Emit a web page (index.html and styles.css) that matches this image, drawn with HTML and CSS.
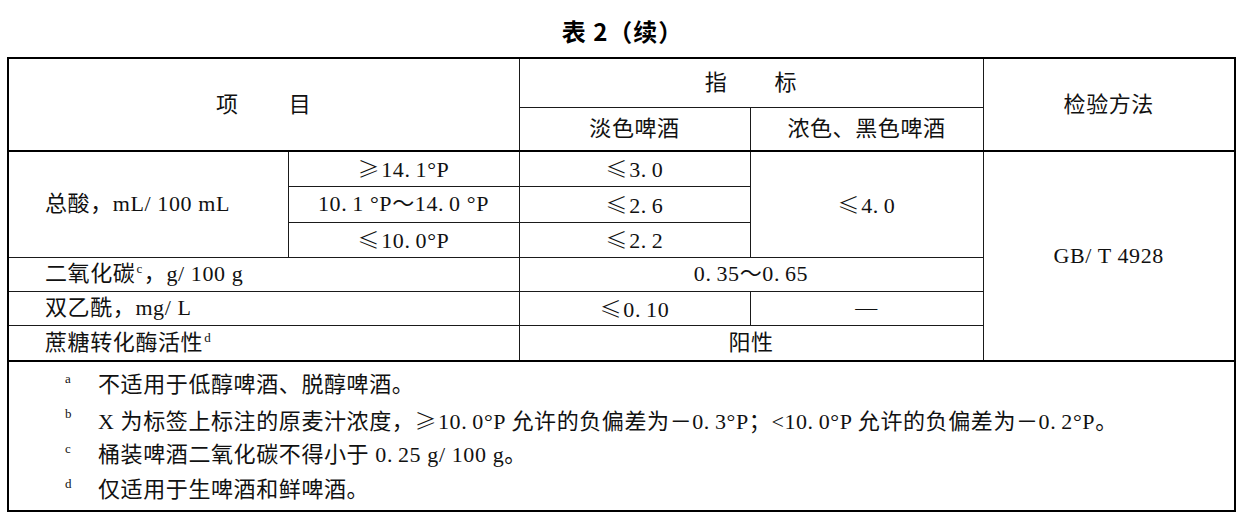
FILE: index.html
```html
<!DOCTYPE html>
<html lang="zh-CN">
<head>
<meta charset="utf-8">
<title>表 2（续）</title>
<link rel="stylesheet" href="styles.css">
</head>
<body>
<div class="page">
  <h1 class="title">表 2（续）</h1>
  <table class="spec">
    <colgroup>
      <col class="c1"><col class="c2"><col class="c3"><col class="c4"><col class="c5">
    </colgroup>
    <tr class="h1">
      <th colspan="2" rowspan="2" class="hb"><span class="spread-a">项 目</span></th>
      <th colspan="2"><span class="spread-b">指 标</span></th>
      <th rowspan="2" class="hb">检验方法</th>
    </tr>
    <tr class="h2">
      <th class="hb">淡色啤酒</th>
      <th class="hb">浓色、黑色啤酒</th>
    </tr>
    <tr class="r1">
      <td rowspan="3" class="label">总酸，mL/ 100 mL</td>
      <td><span class="rel">≥</span>14<span class="dp">.</span>1°P</td>
      <td><span class="rel">≤</span>3<span class="dp">.</span>0</td>
      <td rowspan="3"><span class="rel">≤</span>4<span class="dp">.</span>0</td>
      <td rowspan="6">GB/ T 4928</td>
    </tr>
    <tr class="r2">
      <td>10<span class="dp">.</span>1 °P～14<span class="dp">.</span>0 °P</td>
      <td><span class="rel">≤</span>2<span class="dp">.</span>6</td>
    </tr>
    <tr class="r3">
      <td><span class="rel">≤</span>10<span class="dp">.</span>0°P</td>
      <td><span class="rel">≤</span>2<span class="dp">.</span>2</td>
    </tr>
    <tr class="r4">
      <td colspan="2" class="label">二氧化碳<sup class="fn">c</sup>，g/ 100 g</td>
      <td colspan="2">0<span class="dp">.</span>35～0<span class="dp">.</span>65</td>
    </tr>
    <tr class="r5">
      <td colspan="2" class="label">双乙酰，mg/ L</td>
      <td><span class="rel">≤</span>0<span class="dp">.</span>10</td>
      <td>—</td>
    </tr>
    <tr class="r6">
      <td colspan="2" class="label">蔗糖转化酶活性<sup class="fn">d</sup></td>
      <td colspan="2">阳性</td>
    </tr>
    <tr class="notes">
      <td colspan="5" class="notes-cell">
        <div class="note"><span class="mark">a</span><span class="ntext">不适用于低醇啤酒、脱醇啤酒。</span></div>
        <div class="note"><span class="mark">b</span><span class="ntext">X 为标签上标注的原麦汁浓度，<span class="rel">≥</span>10<span class="dp">.</span>0°P 允许的负偏差为－0<span class="dp">.</span>3°P；&lt;10<span class="dp">.</span>0°P 允许的负偏差为－0<span class="dp">.</span>2°P。</span></div>
        <div class="note"><span class="mark">c</span><span class="ntext">桶装啤酒二氧化碳不得小于 0<span class="dp">.</span>25 g/ 100 g。</span></div>
        <div class="note"><span class="mark">d</span><span class="ntext">仅适用于生啤酒和鲜啤酒。</span></div>
      </td>
    </tr>
  </table>
</div>
</body>
</html>
```

FILE: styles.css
```css
* { box-sizing: border-box; }

html, body {
  margin: 0;
  padding: 0;
  background: #ffffff;
}

body {
  font-family: "Liberation Serif", "Noto Sans CJK SC", serif;
  font-size: 22px;
  letter-spacing: 0.6px;
  color: #111111;
}

.page {
  width: 1245px;
  height: 527px;
  padding-top: 19px;
  overflow: hidden;
}

.title {
  margin: 0 0 14px;
  text-align: center;
  font-family: "Noto Sans CJK SC", sans-serif;
  font-weight: 700;
  font-size: 24px;
  line-height: 24px;
  letter-spacing: 1px;
  color: #000000;
}

.spec {
  margin-left: 7px;
  width: 1227px;
  border-collapse: collapse;
  table-layout: fixed;
  border: 2px solid #000000;
}

.c1 { width: 280px; }
.c2 { width: 231px; }
.c3 { width: 231px; }
.c4 { width: 233px; }
.c5 { width: 252px; }

.spec th,
.spec td {
  border: 1px solid #1a1a1a;
  padding: 0;
  text-align: center;
  vertical-align: middle;
  font-weight: normal;
  line-height: 24px;
}

.spec th.hb { border-bottom: 2px solid #000000; }

.h1 { height: 49px; }
.h2 { height: 44px; }
.r1 { height: 35px; }
.r2 { height: 36px; }
.r3 { height: 35px; }
.r4 { height: 34px; }
.r5 { height: 34px; }
.r6 { height: 36px; }
.notes { height: 150px; }

.r6 td { border-bottom: 2px solid #000000; }

.spec td.label {
  text-align: left;
  padding-left: 36px;
}

.spread-a { word-spacing: 44px; }
.spread-b { word-spacing: 41px; }

.dp { margin-right: 5px; }

.rel {
  font-family: "Noto Sans CJK SC", sans-serif;
  font-weight: 300;
  margin-right: 1px;
}

.fn {
  font-size: 13px;
  line-height: 0;
  vertical-align: 8px;
  margin: 0 1px;
}

.spec td.notes-cell {
  text-align: left;
  vertical-align: top;
  padding: 5px 0 0 56px;
  border-top: 2px solid #000000;
}

.note {
  display: flex;
  align-items: flex-start;
  height: 35px;
  line-height: 35px;
}

.mark {
  width: 33px;
  flex: none;
  font-size: 13px;
  line-height: 13px;
  padding-top: 5px;
}

.ntext {
  white-space: nowrap;
}
```
